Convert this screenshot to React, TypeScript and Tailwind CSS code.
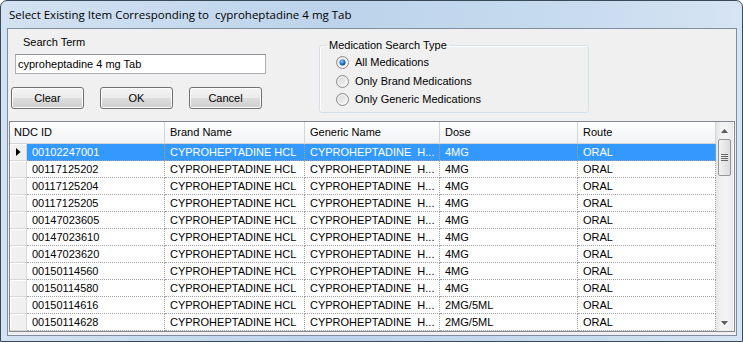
import React from 'react'

const rows: [string, string][] = [
  ['00102247001', '4MG'],
  ['00117125202', '4MG'],
  ['00117125204', '4MG'],
  ['00117125205', '4MG'],
  ['00147023605', '4MG'],
  ['00147023610', '4MG'],
  ['00147023620', '4MG'],
  ['00150114560', '4MG'],
  ['00150114580', '4MG'],
  ['00150114616', '2MG/5ML'],
  ['00150114628', '2MG/5ML'],
]

function Radio({ checked }: { checked?: boolean }) {
  return (
    <svg width="13" height="13" viewBox="0 0 13 13" className="shrink-0">
      <defs>
        <linearGradient id="rfill" x1="0" y1="0" x2="1" y2="1">
          <stop offset="0" stopColor="#d6d6d6" />
          <stop offset="1" stopColor="#f8f8f8" />
        </linearGradient>
        <radialGradient id="rdot" cx="0.4" cy="0.35" r="0.7">
          <stop offset="0" stopColor="#8fd0ff" />
          <stop offset="0.5" stopColor="#2b7fd2" />
          <stop offset="1" stopColor="#123e78" />
        </radialGradient>
      </defs>
      <circle cx="6.5" cy="6.5" r="6" fill="url(#rfill)" stroke="#8c8c8c" strokeWidth="1" />
      <circle cx="6.5" cy="6.5" r="4.5" fill="none" stroke="#ffffff" strokeOpacity="0.6" strokeWidth="1" />
      {checked && <circle cx="6.5" cy="6.5" r="3" fill="url(#rdot)" />}
    </svg>
  )
}

function Button({ label }: { label: string }) {
  return (
    <div className="w-[73px] h-[22px] rounded-[3px] border border-[#707070] bg-[linear-gradient(#f3f3f3,#ebebeb_50%,#dddddd_50%,#cfcfcf)] shadow-[inset_0_0_0_1px_#fcfcfc] flex items-center justify-center text-[11px] text-black">
      {label}
    </div>
  )
}

function Arrow({ up }: { up?: boolean }) {
  return (
    <svg width="7" height="4" viewBox="0 0 7 4">
      <path d={up ? 'M0 4 L3.5 0 L7 4 Z' : 'M0 0 L3.5 4 L7 0 Z'} fill="#5a5a5a" />
    </svg>
  )
}

export default function App() {
  return (
    <div className="w-[743px] h-[342px] font-['Liberation_Sans',Arial,sans-serif] text-black">
      <div className="w-full h-full flex flex-col rounded-t-[7px] border border-[#3a4958] bg-[linear-gradient(90deg,#d3e2f2,#bcd3eb_45%,#c9dcef_80%,#d6e4f3)] overflow-hidden">
        <div className="h-[27px] shrink-0 flex items-center pl-[8px] pt-[1px] font-['Open_Sans',sans-serif] text-[11.5px] whitespace-pre">
          Select Existing Item Corresponding to  cyproheptadine 4 mg Tab
        </div>
        <div className="flex-1 ml-[6px] mr-[5px] mb-[5px] border border-[#7f8d9c] bg-[#f0f0f0] flex flex-col">
          <div className="h-[92px] shrink-0 flex">
            <div className="w-[311px] shrink-0 flex flex-col">
              <div className="ml-[15px] mt-[7px] h-[13px] leading-[13px] text-[11px]">Search Term</div>
              <div className="ml-[7px] mt-[5px] w-[251px] h-[20px] border border-[#abadb3] border-t-[#8e9095] bg-white flex items-center pl-[2px] text-[11px]">
                cyproheptadine 4 mg Tab
              </div>
              <div className="ml-[3px] mt-[13px] flex gap-[16px]">
                <Button label="Clear" />
                <Button label="OK" />
                <Button label="Cancel" />
              </div>
            </div>
            <fieldset className="mt-[10px] w-[270px] h-[74px] border border-[#d5dfe5] rounded-[3px] shadow-[inset_1px_1px_0_#ffffff]">
              <legend className="ml-[7px] px-[2px] text-[11px] leading-[13px]">Medication Search Type</legend>
              <div className="flex flex-col gap-[5.5px] mt-[4px] pl-[16px]">
                <div className="flex items-center gap-[6px] h-[13px] text-[11px]">
                  <Radio checked />
                  <span>All Medications</span>
                </div>
                <div className="flex items-center gap-[6px] h-[13px] text-[11px]">
                  <Radio />
                  <span>Only Brand Medications</span>
                </div>
                <div className="flex items-center gap-[6px] h-[13px] text-[11px]">
                  <Radio />
                  <span>Only Generic Medications</span>
                </div>
              </div>
            </fieldset>
          </div>
          <div className="mx-[1px] h-[211px] border border-[#828790] bg-white flex">
            <div className="w-[706px] flex flex-col">
              <div className="h-[22px] flex border-b border-[#d5d5d5] bg-[linear-gradient(#ffffff,#f7f8fa_50%,#f1f2f4)] text-[11px]">
                <div className="w-[155px] border-r border-[#d5d5d5] flex items-center pl-[4px]">NDC ID</div>
                <div className="w-[140px] border-r border-[#d5d5d5] flex items-center pl-[5px]">Brand Name</div>
                <div className="w-[135px] border-r border-[#d5d5d5] flex items-center pl-[5px]">Generic Name</div>
                <div className="w-[138px] border-r border-[#d5d5d5] flex items-center pl-[5px]">Dose</div>
                <div className="w-[138px] border-r border-[#d5d5d5] flex items-center pl-[5px]">Route</div>
              </div>
              {rows.map(([id, dose], i) => {
                const sel = i === 0
                const cell = `h-[17px] border-r border-b border-dotted border-[#a0a0a0] flex items-center pl-[5px] whitespace-pre overflow-hidden ${sel ? 'bg-[#3399ff] text-white' : ''}`
                return (
                  <div key={id} className="flex text-[11px]">
                    <div className="w-[17px] h-[17px] shrink-0 border-b border-r border-[#d8d8d8] bg-[#f0f0f0] shadow-[inset_1px_1px_0_#ffffff] flex items-center justify-center">
                      {sel && (
                        <svg width="5" height="8" viewBox="0 0 5 8">
                          <path d="M0 0 L4.5 4 L0 8 Z" fill="#000" />
                        </svg>
                      )}
                    </div>
                    <div className={`w-[138px] ${cell}`}>{id}</div>
                    <div className={`w-[140px] ${cell}`}>CYPROHEPTADINE HCL</div>
                    <div className={`w-[135px] ${cell}`}>CYPROHEPTADINE  H...</div>
                    <div className={`w-[138px] ${cell}`}>{dose}</div>
                    <div className={`w-[138px] ${cell}`}>ORAL</div>
                  </div>
                )
              })}
            </div>
            <div className="w-[17px] flex flex-col bg-[linear-gradient(90deg,#e5e5e5,#f2f2f2_30%,#f2f2f2_70%,#e8e8e8)]">
              <div className="h-[17px] flex items-center justify-center">
                <Arrow up />
              </div>
              <div className="mx-[2px] h-[37px] rounded-[2px] border border-[#979797] bg-[linear-gradient(90deg,#f2f2f2,#e6e6e6_50%,#dcdcdc)] flex flex-col items-center justify-center gap-[1px]">
                <div className="w-[7px] h-[1px] bg-[#666]" />
                <div className="w-[7px] h-[1px] bg-[#666]" />
                <div className="w-[7px] h-[1px] bg-[#666]" />
                <div className="w-[7px] h-[1px] bg-[#666]" />
              </div>
              <div className="flex-1" />
              <div className="h-[17px] flex items-center justify-center">
                <Arrow />
              </div>
            </div>
          </div>
        </div>
      </div>
    </div>
  )
}
